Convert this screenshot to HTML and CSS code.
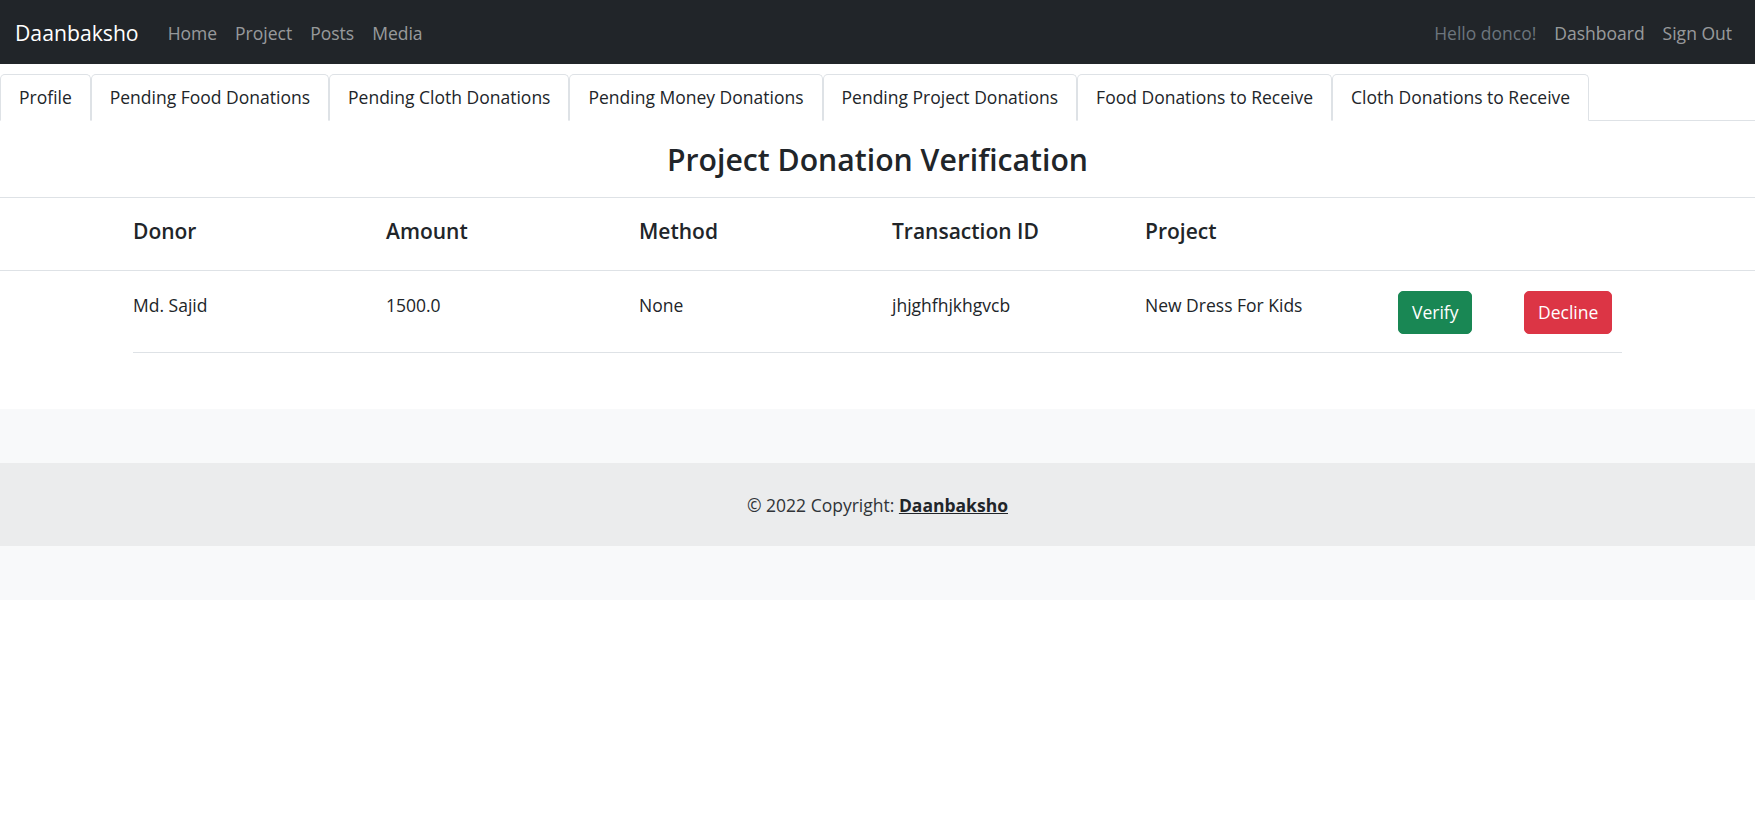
FILE: index.html
```html
<!DOCTYPE html>
<html lang="en">
<head>
<meta charset="utf-8">
<title>Daanbaksho - Project Donation Verification</title>
<link rel="stylesheet" href="styles.css">
</head>
<body>
<nav class="topbar">
  <a class="brand" href="#">Daanbaksho</a>
  <ul class="menu">
    <li><a href="#">Home</a></li>
    <li><a href="#">Project</a></li>
    <li><a href="#">Posts</a></li>
    <li><a href="#">Media</a></li>
  </ul>
  <ul class="menu menu-right">
    <li><span class="hello">Hello donco!</span></li>
    <li><a href="#">Dashboard</a></li>
    <li><a href="#">Sign Out</a></li>
  </ul>
</nav>

<ul class="tabs">
  <li><a class="tab" href="#">Profile</a></li>
  <li><a class="tab" href="#">Pending Food Donations</a></li>
  <li><a class="tab" href="#">Pending Cloth Donations</a></li>
  <li><a class="tab" href="#">Pending Money Donations</a></li>
  <li><a class="tab" href="#">Pending Project Donations</a></li>
  <li><a class="tab" href="#">Food Donations to Receive</a></li>
  <li><a class="tab" href="#">Cloth Donations to Receive</a></li>
</ul>

<main>
  <h3 class="title">Project Donation Verification</h3>
  <div class="table">
    <div class="thead">
      <div class="grid">
        <div class="th">Donor</div>
        <div class="th">Amount</div>
        <div class="th">Method</div>
        <div class="th">Transaction ID</div>
        <div class="th">Project</div>
        <div class="th"></div>
        <div class="th"></div>
      </div>
    </div>
    <div class="tbody">
      <div class="grid row">
        <div class="td">Md. Sajid</div>
        <div class="td">1500.0</div>
        <div class="td">None</div>
        <div class="td">jhjghfhjkhgvcb</div>
        <div class="td">New Dress For Kids</div>
        <div class="td"><button class="btn btn-verify">Verify</button></div>
        <div class="td"><button class="btn btn-decline">Decline</button></div>
      </div>
    </div>
  </div>
</main>

<footer class="footer">
  <div class="copyright">© 2022 Copyright: <a href="#">Daanbaksho</a></div>
</footer>
</body>
</html>
```

FILE: styles.css
```css
* { box-sizing: border-box; }

html, body {
  margin: 0;
  padding: 0;
}

body {
  font-family: "Open Sans", "Noto Sans", sans-serif;
  font-size: 17.5px;
  line-height: 27px;
  color: #212529;
  background: #fff;
}

a { text-decoration: none; color: inherit; }
ul { list-style: none; margin: 0; padding: 0; }

/* ---------- top bar ---------- */
.topbar {
  height: 64px;
  background: #212529;
  display: flex;
  align-items: center;
  padding: 2px 14px 0 15px;
}

.brand {
  color: #fff;
  font-size: 21.2px;
  line-height: 30px;
  margin-right: 20px;
}

.menu {
  display: flex;
  align-items: center;
}

.menu a,
.menu .hello {
  display: block;
  padding: 0 9px;
  color: rgba(255, 255, 255, 0.55);
}

.menu .hello { color: #6c757d; }

.menu-right { margin-left: auto; }

/* ---------- tabs ---------- */
.tabs {
  display: flex;
  margin-top: 10px;
  border-bottom: 1px solid #dee2e6;
}

.tab {
  display: block;
  padding: 9px 18px;
  margin-bottom: -1px;
  background: #fff;
  border: 1px solid #dee2e6;
  border-bottom-color: #fff;
  border-radius: 5px 5px 0 0;
  color: #212529;
}

/* ---------- content ---------- */
.title {
  margin: 0;
  padding: 20px 0 18px;
  text-align: center;
  font-size: 30.2px;
  line-height: 38px;
  font-weight: 600;
}

.grid {
  display: grid;
  grid-template-columns: repeat(5, 253px) 126px 1fr;
}

.thead {
  border-top: 1px solid #dee2e6;
  border-bottom: 1px solid #dee2e6;
  padding-left: 133px;
}

.th {
  padding: 17px 0 22px;
  font-size: 21px;
  line-height: 33px;
  font-weight: 600;
}

.tbody {
  padding: 0 133px;
}

.row {
  border-bottom: 1px solid #dee2e6;
}

.td {
  padding: 21px 0 18px;
  align-self: start;
}

.btn {
  font-family: inherit;
  font-size: 17.5px;
  line-height: 27px;
  color: #fff;
  border: 1px solid transparent;
  border-radius: 5px;
  padding: 7px 13px;
  margin-top: -1px;
  cursor: pointer;
}

.btn-verify { background: #198754; border-color: #198754; }
.btn-decline { background: #dc3545; border-color: #dc3545; }

/* ---------- footer ---------- */
.footer {
  margin-top: 56px;
  background: #f8f9fa;
  padding: 54px 0;
}

.copyright {
  background: rgba(0, 0, 0, 0.05);
  padding: 29px 0 27px;
  text-align: center;
  color: #303438;
}

.copyright a {
  color: #212529;
  font-weight: 700;
  text-decoration: underline;
}
```
